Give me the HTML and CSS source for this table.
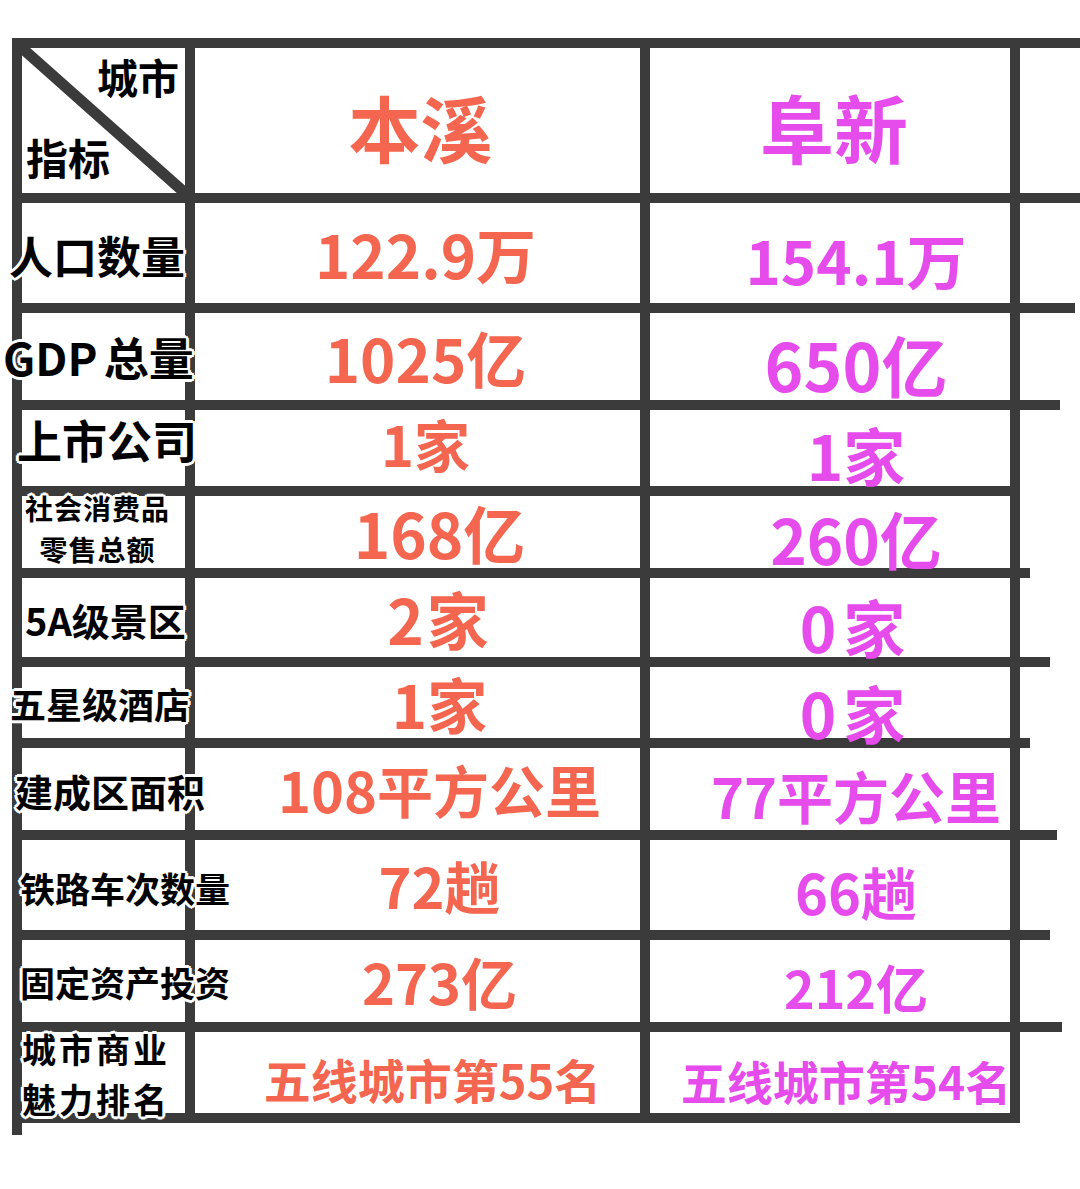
FILE: index.html
```html
<!DOCTYPE html>
<html lang="zh-CN">
<head>
<meta charset="utf-8">
<title>本溪 阜新 对比</title>
<link rel="stylesheet" href="styles.css">
</head>
<body>
<div class="tbl">
  <div class="c1 hd">
    <svg class="diag" width="163" height="145" viewBox="0 0 163 145"><line x1="0" y1="0" x2="163" y2="145"/></svg>
    <span class="hd-city">城市</span>
    <span class="hd-ind">指标</span>
  </div>
  <div class="c2 hdv hd2"><span class="v red s72">本溪</span></div>
  <div class="c3 hdv hd3"><span class="v pink s74">阜新</span></div>
  <div class="c4"><i class="bar w60"></i></div>

  <div class="c1"><span class="lab lab-pop">人口数量</span></div>
  <div class="c2"><span class="v red s60">122.9万</span></div>
  <div class="c3"><span class="v pink s60">154.1万</span></div>
  <div class="c4"><i class="bar w55"></i></div>

  <div class="c1"><span class="lab lab-gdp">GDP 总量</span></div>
  <div class="c2"><span class="v red s60">1025亿</span></div>
  <div class="c3"><span class="v pink s66">650亿</span></div>
  <div class="c4"><i class="bar w40"></i></div>

  <div class="c1"><span class="lab lab-list">上市公司</span></div>
  <div class="c2"><span class="v red s56 up">1家</span></div>
  <div class="c3"><span class="v pink s62">1家</span></div>
  <div class="c4"></div>

  <div class="c1"><span class="lab lab-retail">社会消费品<br>零售总额</span></div>
  <div class="c2 sh"><span class="v red s62">168亿</span></div>
  <div class="c3"><span class="v pink s62">260亿</span></div>
  <div class="c4"><i class="bar w10"></i></div>

  <div class="c1"><span class="lab lab-5a">5A级景区</span></div>
  <div class="c2 sh"><span class="v red s62 wide">2家</span></div>
  <div class="c3 zero-a"><span class="v pink s62 wider">0家</span></div>
  <div class="c4"><i class="bar w30"></i></div>

  <div class="c1"><span class="lab lab-hotel">五星级酒店</span></div>
  <div class="c2 sh"><span class="v red s60">1家</span></div>
  <div class="c3 zero-b"><span class="v pink s62 wider">0家</span></div>
  <div class="c4"><i class="bar w10"></i></div>

  <div class="c1"><span class="lab lab-area">建成区面积</span></div>
  <div class="c2 sh"><span class="v red s56">108平方公里</span></div>
  <div class="c3"><span class="v pink s56">77平方公里</span></div>
  <div class="c4"><i class="bar w37"></i></div>

  <div class="c1"><span class="lab lab-rail">铁路车次数量</span></div>
  <div class="c2 sh"><span class="v red s56">72趟</span></div>
  <div class="c3"><span class="v pink s56">66趟</span></div>
  <div class="c4"><i class="bar w30"></i></div>

  <div class="c1"><span class="lab lab-inv">固定资产投资</span></div>
  <div class="c2 sh"><span class="v red s56">273亿</span></div>
  <div class="c3"><span class="v pink s52">212亿</span></div>
  <div class="c4"><i class="bar w42"></i></div>

  <div class="c1"><span class="lab lab-rank">城市商业<br>魅力排名</span></div>
  <div class="c2 low"><span class="v red s47">五线城市第55名</span></div>
  <div class="c3 last"><span class="v pink s46">五线城市第54名</span></div>
  <div class="c4"></div>
</div>
<div class="tail"></div>
</body>
</html>
```
FILE: styles.css
```css
* { box-sizing: border-box; }
html, body { margin: 0; padding: 0; background: #fff; }
body {
  font-family: "Noto Sans CJK SC", "Noto Sans", sans-serif;
  width: 1080px;
  height: 1189px;
  overflow: hidden;
}

.tbl {
  margin: 38px 0 0 12px;
  width: 1068px;
  display: grid;
  grid-template-columns: 173px 455px 370px 60px;
  grid-template-rows: 155px 110px 97px 86px 82px 89px 81px 92px 100px 92px 91px;
  border-top: 10px solid #3b3b3b;
  border-left: 10px solid #3b3b3b;
}

.c1, .c2, .c3 {
  border-right: 10px solid #3b3b3b;
  border-bottom: 10px solid #3b3b3b;
  display: flex;
  align-items: center;
  min-width: 0;
}
.c1 { justify-content: flex-start; }
.c2 { justify-content: center; padding-left: 16px; }
.c2.sh { padding-left: 44px; }
.c3 { justify-content: center; padding-left: 52px; padding-top: 12px; }
.hdv { padding-top: 10px; }
.c2.hd2 { padding-left: 6px; }
.hd3 { padding-left: 8px; }
.zero-a { padding-top: 16px; }
.zero-b { padding-top: 18px; }
.last { padding-left: 32px; padding-top: 14px; }
.c2.low { padding-top: 12px; padding-left: 30px; }

.c4 {
  display: flex;
  flex-direction: column;
  justify-content: flex-end;
}
.bar { display: block; height: 10px; background: #3b3b3b; }
.w60 { width: 60px; }
.w55 { width: 55px; }
.w42 { width: 42px; }
.w40 { width: 40px; }
.w37 { width: 37px; }
.w30 { width: 30px; }
.w10 { width: 10px; }

/* header cell */
.hd {
  position: relative;
  flex-direction: column;
  align-items: stretch;
  justify-content: space-between;
  padding: 8px 0 15px 0;
}
.diag {
  position: absolute;
  left: 0;
  top: 0;
  overflow: visible;
}
.diag line { stroke: #3b3b3b; stroke-width: 11; stroke-linecap: square; }
.hd-city, .hd-ind {
  font-size: 41px;
  font-weight: 700;
  line-height: 1;
  color: #000;
}
.hd-city { align-self: flex-end; margin-right: 6px; }
.hd-ind { align-self: flex-start; margin-left: 4px; font-size: 42px; }

/* labels */
.lab {
  color: #000;
  font-weight: 700;
  line-height: 1;
  white-space: nowrap;
  position: relative;
  text-shadow: 2px 0 #fff, -2px 0 #fff, 0 2px #fff, 0 -2px #fff,
               2px 2px #fff, -2px -2px #fff, 2px -2px #fff, -2px 2px #fff,
               3px 0 #fff, -3px 0 #fff, 0 3px #fff, 0 -3px #fff;
}
.lab-pop { font-size: 44px; margin-left: -13px; margin-top: 4px; }
.lab-gdp { font-size: 45px; margin-left: -19px; word-spacing: -4px; }
.lab-list { font-size: 45px; margin-left: -5px; margin-top: -18px; }
.lab-retail { font-size: 28px; line-height: 41px; letter-spacing: 1px; text-align: center; margin-left: 3px; margin-top: -6px; }
.lab-5a { font-size: 38px; margin-left: 3px; margin-top: 4px; }
.lab-hotel { font-size: 36px; margin-left: -12px; }
.lab-area { font-size: 38px; margin-left: -7px; margin-top: 4px; }
.lab-rail { font-size: 35px; margin-left: -2px; margin-top: 4px; }
.lab-inv { font-size: 35px; margin-left: -2px; }
.lab-rank { font-size: 34px; line-height: 50px; letter-spacing: 3px; margin-left: 0; margin-top: 2px; }

/* values */
.v {
  font-weight: 700;
  line-height: 1;
  white-space: nowrap;
}
.red { color: #f4664f; }
.pink { color: #e64ceb; }
.up { margin-top: -10px; }
.wide { letter-spacing: 3px; }
.wider { letter-spacing: 7px; }
.s74 { font-size: 74px; }
.s72 { font-size: 72px; }
.s66 { font-size: 66px; }
.s62 { font-size: 62px; }
.s60 { font-size: 60px; }
.s56 { font-size: 56px; }
.s52 { font-size: 52px; }
.s47 { font-size: 47px; }
.s46 { font-size: 46px; }

.tail {
  margin-left: 12px;
  width: 10px;
  height: 12px;
  background: #3b3b3b;
}
```
